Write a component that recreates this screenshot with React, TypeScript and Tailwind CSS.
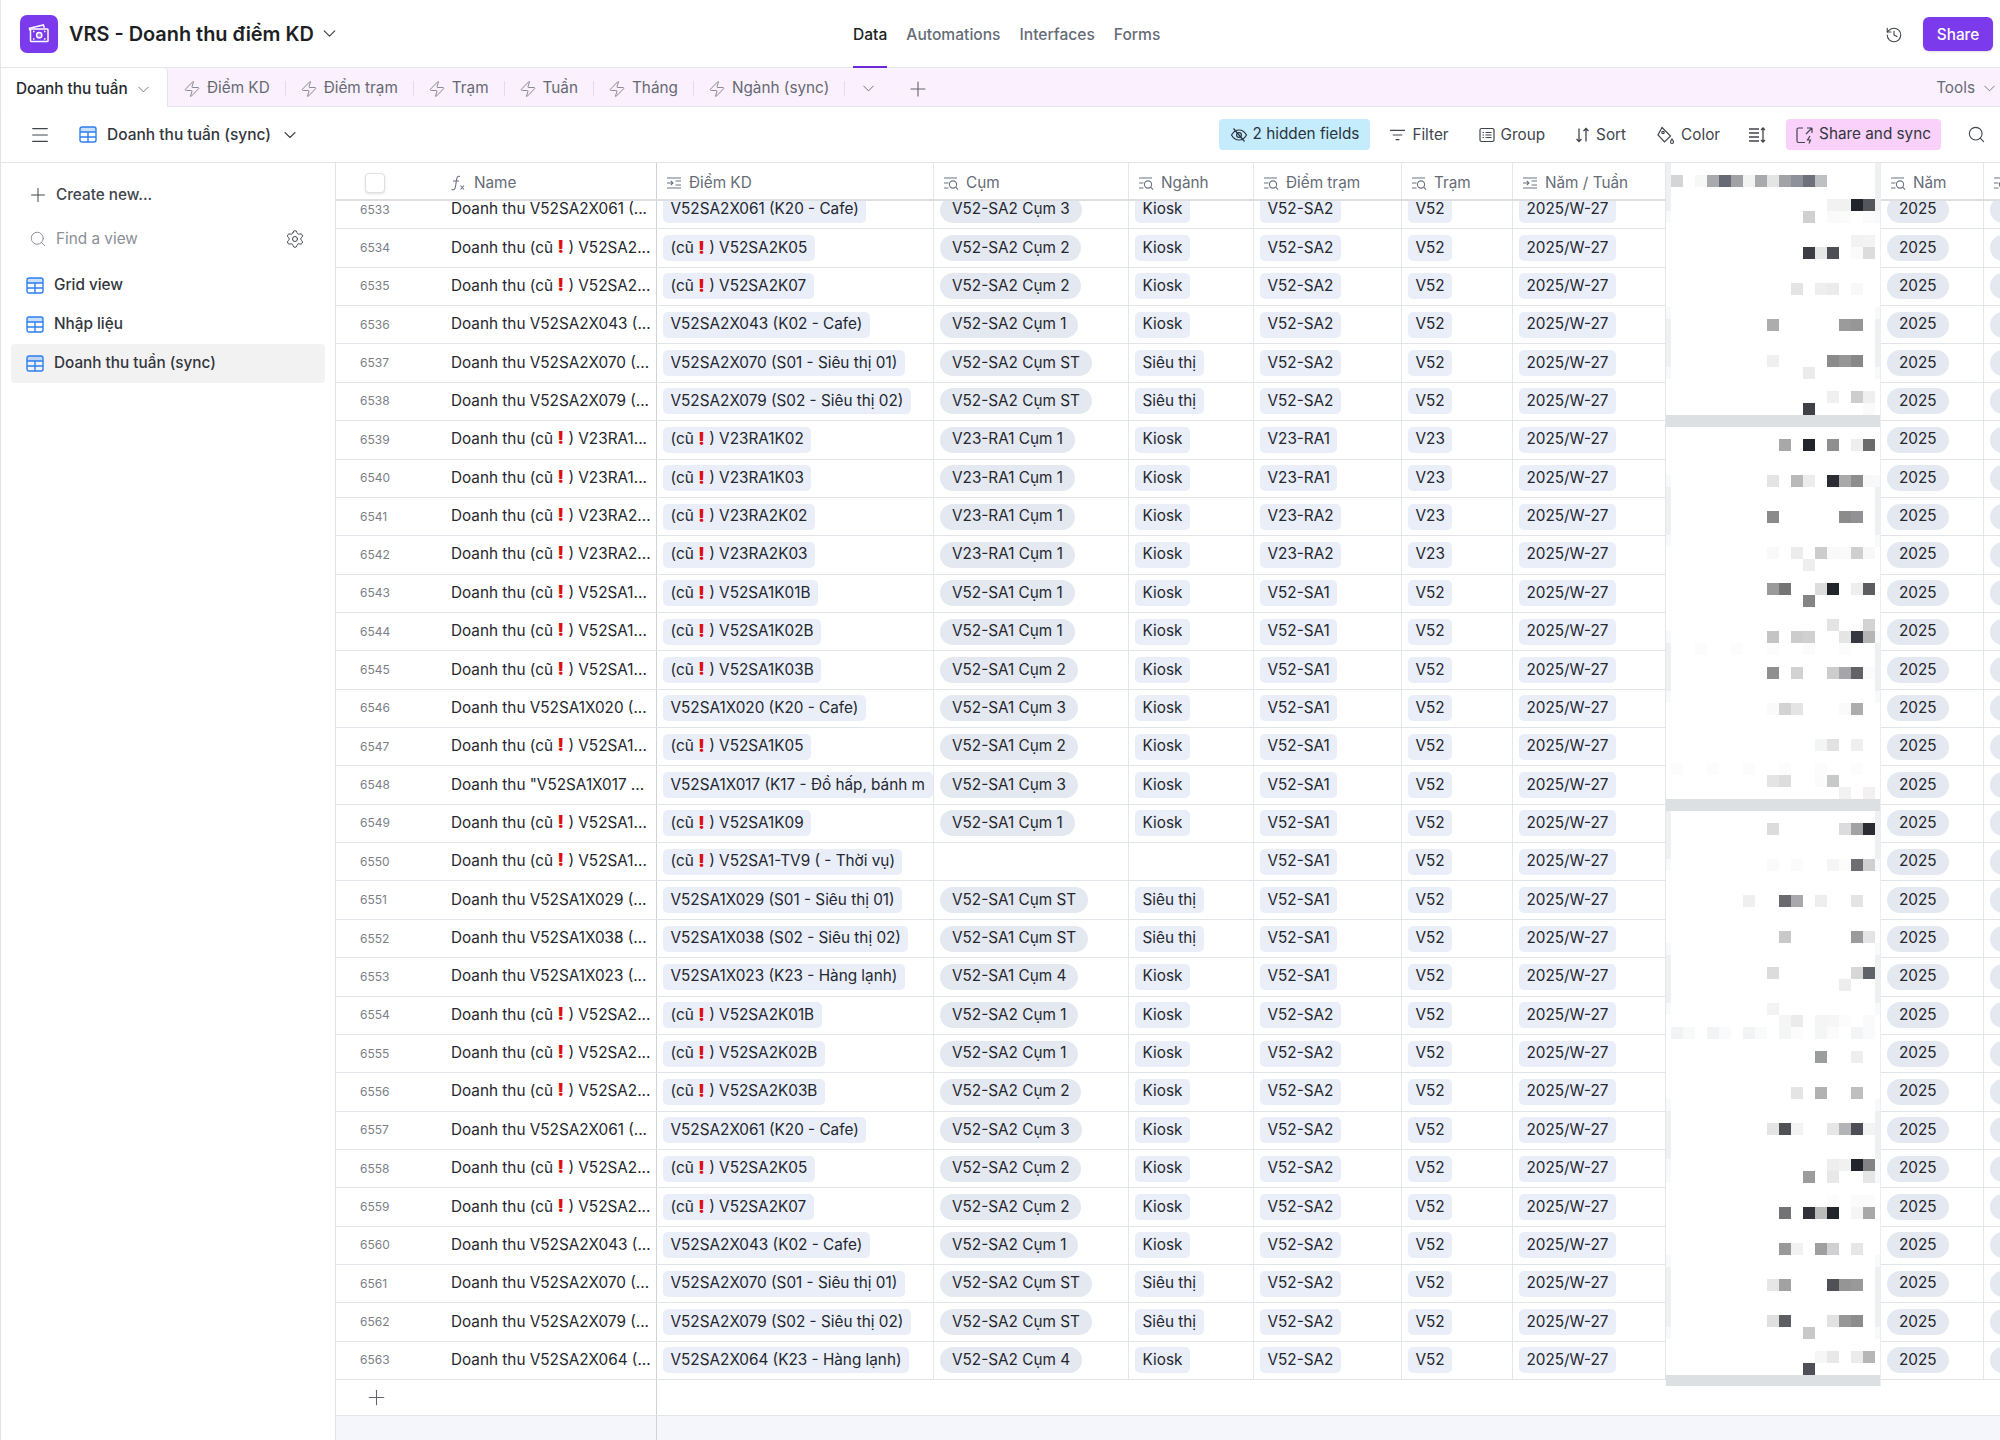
import { ChevronDown, History, Menu, Plus, Search, Settings, Zap } from 'lucide-react';

type RowData = {
  id: number;
  name: string;
  old?: boolean;
  kd: string;
  cum?: string;
  nganh?: string;
  tram: string;
  short: string;
};

const shop = (id: number, code: string, label: string, cum: string, nganh = 'Kiosk'): RowData => {
  const tram = code.slice(0, 3) + '-' + code.slice(3, 6);
  return {
    id,
    name: `${code} (...`,
    kd: `${code} (${label})`,
    cum: `${tram} Cụm ${cum}`,
    nganh,
    tram,
    short: code.slice(0, 3),
  };
};

const old = (id: number, code: string, cum: string, cumPrefix?: string): RowData => {
  const tram = code.slice(0, 3) + '-' + code.slice(3, 6);
  return {
    id,
    name: `${code.slice(0, 6)}...`,
    old: true,
    kd: code,
    cum: `${cumPrefix ?? tram} Cụm ${cum}`,
    nganh: 'Kiosk',
    tram,
    short: code.slice(0, 3),
  };
};

const rows: RowData[] = [
  shop(6533, 'V52SA2X061', 'K20 - Cafe', '3'),
  old(6534, 'V52SA2K05', '2'),
  old(6535, 'V52SA2K07', '2'),
  shop(6536, 'V52SA2X043', 'K02 - Cafe', '1'),
  shop(6537, 'V52SA2X070', 'S01 - Siêu thị 01', 'ST', 'Siêu thị'),
  shop(6538, 'V52SA2X079', 'S02 - Siêu thị 02', 'ST', 'Siêu thị'),
  old(6539, 'V23RA1K02', '1'),
  old(6540, 'V23RA1K03', '1'),
  old(6541, 'V23RA2K02', '1', 'V23-RA1'),
  old(6542, 'V23RA2K03', '1', 'V23-RA1'),
  old(6543, 'V52SA1K01B', '1'),
  old(6544, 'V52SA1K02B', '1'),
  old(6545, 'V52SA1K03B', '2'),
  shop(6546, 'V52SA1X020', 'K20 - Cafe', '3'),
  old(6547, 'V52SA1K05', '2'),
  {
    id: 6548,
    name: '"V52SA1X017 ...',
    kd: 'V52SA1X017 (K17 - Đồ hấp, bánh m',
    cum: 'V52-SA1 Cụm 3',
    nganh: 'Kiosk',
    tram: 'V52-SA1',
    short: 'V52',
  },
  old(6549, 'V52SA1K09', '1'),
  { id: 6550, name: 'V52SA1...', old: true, kd: 'V52SA1-TV9 ( - Thời vụ)', tram: 'V52-SA1', short: 'V52' },
  shop(6551, 'V52SA1X029', 'S01 - Siêu thị 01', 'ST', 'Siêu thị'),
  shop(6552, 'V52SA1X038', 'S02 - Siêu thị 02', 'ST', 'Siêu thị'),
  shop(6553, 'V52SA1X023', 'K23 - Hàng lạnh', '4'),
  old(6554, 'V52SA2K01B', '1'),
  old(6555, 'V52SA2K02B', '1'),
  old(6556, 'V52SA2K03B', '2'),
  shop(6557, 'V52SA2X061', 'K20 - Cafe', '3'),
  old(6558, 'V52SA2K05', '2'),
  old(6559, 'V52SA2K07', '2'),
  shop(6560, 'V52SA2X043', 'K02 - Cafe', '1'),
  shop(6561, 'V52SA2X070', 'S01 - Siêu thị 01', 'ST', 'Siêu thị'),
  shop(6562, 'V52SA2X079', 'S02 - Siêu thị 02', 'ST', 'Siêu thị'),
  shop(6563, 'V52SA2X064', 'K23 - Hàng lạnh', '4'),
];

// blurred column: [row, [[cell, colour], ...]] on a 12px raster
const mosaic: [number, [number, string][]][] = [
  [1, [[0, '#d4d5d7'], [2, '#f7f7f7'], [3, '#a9aaad'], [4, '#666a75'], [5, '#a0a2a6'], [6, '#f3f3f3'], [7, '#a9aaae'], [8, '#e4e4e5'], [9, '#a2a3a7'], [10, '#8e909a'], [11, '#6e717c'], [12, '#bfc0c4']]],
  [3, [[13, '#f2f2f2'], [14, '#f1f1f1'], [15, '#22242b'], [16, '#55565b']]],
  [4, [[11, '#d0d0d0'], [13, '#fafafa'], [14, '#fbfbfb'], [16, '#fbfbfb']]],
  [6, [[15, '#f2f2f2'], [16, '#f3f3f3']]],
  [7, [[11, '#3c3d44'], [12, '#e6e6e6'], [13, '#4c4d55'], [15, '#fafafa'], [16, '#dcdcdc']]],
  [10, [[10, '#e4e4e4'], [12, '#eeeeee'], [13, '#ebebeb'], [15, '#f8f8f8']]],
  [13, [[8, '#adadad'], [14, '#9b9b9b'], [15, '#969696']]],
  [16, [[8, '#efefef'], [13, '#8b8b8b'], [14, '#969696'], [15, '#888888']]],
  [17, [[11, '#ebebeb']]],
  [19, [[13, '#f0f0f0'], [15, '#cdcdcd'], [16, '#efefef']]],
  [20, [[11, '#404146'], [16, '#fafafa']]],
  [23, [[9, '#a8a8a8'], [11, '#22242b'], [13, '#8f8f8f'], [15, '#eeeeee'], [16, '#6b6b6b']]],
  [26, [[8, '#e4e4e4'], [10, '#b9b9b9'], [11, '#ececec'], [13, '#2b2c33'], [14, '#a9a9a9'], [15, '#8d8d8d'], [16, '#f8f8f8']]],
  [29, [[8, '#8a8a8a'], [14, '#8c8c8c'], [15, '#929296']]],
  [32, [[8, '#f9f9f9'], [10, '#ececec'], [12, '#cccccc'], [13, '#f9f9f9'], [14, '#fafafa'], [15, '#cfcfcf'], [16, '#f8f8f8']]],
  [33, [[11, '#eeeeee']]],
  [35, [[8, '#9a9a9a'], [9, '#747474'], [12, '#dddddd'], [13, '#22242b'], [15, '#eeeeee'], [16, '#5c5c61']]],
  [36, [[11, '#858585']]],
  [38, [[13, '#e4e4e4'], [16, '#d3d3d3']]],
  [39, [[8, '#c4c4c4'], [10, '#cccccc'], [11, '#d0d0d0'], [14, '#e5e5e5'], [15, '#36383f'], [16, '#b5b5b5']]],
  [40, [[2, '#fcfcfc'], [5, '#fcfcfc'], [8, '#fcfcfc'], [11, '#fbfbfb'], [14, '#fcfcfc']]],
  [42, [[8, '#8f8f8f'], [10, '#d2d2d2'], [13, '#cdcdcd'], [14, '#a6a6a8'], [15, '#626266'], [16, '#fbfbfb']]],
  [45, [[8, '#fafafa'], [9, '#d3d3d3'], [10, '#e4e4e4'], [14, '#fafafa'], [15, '#adadad']]],
  [48, [[12, '#f3f4f4'], [13, '#e2e2e2'], [15, '#efefef']]],
  [50, [[0, '#fcfcfc'], [3, '#fcfcfc'], [6, '#fcfcfc'], [9, '#fcfcfc'], [12, '#fcfcfc'], [15, '#fcfcfc']]],
  [51, [[8, '#e4e4e4'], [9, '#dddddd'], [12, '#fbfbfb'], [13, '#c8caca']]],
  [52, [[14, '#f2f2f2'], [16, '#f2f0f0']]],
  [55, [[8, '#dcdcdc'], [14, '#dcdcdc'], [15, '#a2a2a4'], [16, '#2a2b33']]],
  [58, [[8, '#fafafa'], [10, '#fbfbfb'], [13, '#f5f5f5'], [14, '#fcfcfc'], [15, '#6e6e72'], [16, '#d0d0d0']]],
  [61, [[6, '#efefef'], [9, '#6b6b6f'], [10, '#a9a9ad'], [12, '#eeeeee'], [15, '#e4e4e4']]],
  [64, [[9, '#c8c8c8'], [15, '#9b9b9e'], [16, '#e4e4e4']]],
  [67, [[8, '#dcdcdc'], [15, '#d7d7d7'], [16, '#606269']]],
  [68, [[14, '#ededed']]],
  [70, [[8, '#f3f3f3']]],
  [71, [[9, '#f5f5f5'], [10, '#ebebeb'], [12, '#f5f5f5'], [13, '#f6f6f6'], [14, '#fcfcfc'], [16, '#fafafa']]],
  [72, [[0, '#f2f3f4'], [1, '#f8f9f9'], [3, '#f2f3f5'], [4, '#f9fafa'], [6, '#f2f3f5'], [7, '#f9fafa'], [9, '#f4f5f5'], [10, '#fcfcfc'], [12, '#f4f5f5'], [13, '#fbfbfb'], [15, '#f3f4f5'], [16, '#fafafa']]],
  [74, [[12, '#9c9e9e'], [15, '#eeeeee']]],
  [77, [[10, '#e4e4e4'], [12, '#b2b2b2'], [15, '#bfbfbf']]],
  [80, [[8, '#e4e4e4'], [9, '#505157'], [10, '#f3f3f3'], [13, '#e6e6e6'], [14, '#b4b4b6'], [15, '#4c4d55'], [16, '#f3f3f3']]],
  [83, [[13, '#eeeeee'], [14, '#f1f1f1'], [15, '#22242b'], [16, '#838385']]],
  [84, [[11, '#9c9c9c'], [13, '#e8e8e8'], [16, '#e6e6e6']]],
  [86, [[13, '#fcfcfc'], [15, '#fbfbfb'], [16, '#fbfbfb']]],
  [87, [[9, '#737376'], [11, '#32333a'], [12, '#bbbbbb'], [13, '#22242b'], [15, '#f5f5f5'], [16, '#a8a8a8']]],
  [90, [[9, '#999999'], [10, '#f2f2f2'], [12, '#9f9f9f'], [13, '#d0d0d2'], [15, '#e6e6e6']]],
  [93, [[8, '#e6e6e6'], [9, '#a2a2a2'], [13, '#505157'], [14, '#959595'], [15, '#999999']]],
  [96, [[8, '#e0e0e0'], [9, '#5e5f64'], [13, '#e2e2e2'], [14, '#979797'], [15, '#8d8d8d']]],
  [97, [[11, '#c8c8c8']]],
  [99, [[12, '#f6f6f6'], [13, '#e8e8e8'], [15, '#ebebeb'], [16, '#b6b6b6']]],
  [100, [[11, '#4f5057']]],
];

const stripDark = [0, 1, 2, 3, 13, 14, 15, 16, 27, 28, 29, 30, 40, 41, 42, 43, 54, 55, 56, 57, 66, 67, 68, 69, 79, 80, 81, 82, 92, 93, 94, 95, 96];
const stripLight = [4, 12, 17, 26, 31, 39, 44, 58, 65, 70, 78, 83, 84, 91, 97];

function RedactedColumn() {
  return (
    <svg className="absolute left-[1330px] top-0 z-20" width={215} height={1223} viewBox="0 0 215 1223">
      <rect width={214} height={1223} fill="#ffffff" />
      <rect x={214} width={1} height={1223} fill="#eceef1" />
      {stripDark.map((r) => (
        <g key={r} fill="#eef0f2">
          <rect x={0} y={r * 12} width={5} height={12} />
          <rect x={209} y={r * 12} width={5} height={12} />
        </g>
      ))}
      {stripLight.map((r) => (
        <g key={r} fill="#f8f9fa">
          <rect x={0} y={r * 12} width={5} height={12} />
          <rect x={209} y={r * 12} width={5} height={12} />
        </g>
      ))}
      {mosaic.map(([r, cells]) =>
        cells.map(([c, colour]) => <rect key={`${r}-${c}`} x={5 + c * 12} y={r * 12} width={12} height={12} fill={colour} />),
      )}
      {[21, 53, 101].map((r) => (
        <rect key={r} x={0} y={r * 12} width={214} height={12} fill="#dde0e3" />
      ))}
    </svg>
  );
}

function GridIcon() {
  return (
    <svg width="18" height="17" viewBox="0 0 18 17" fill="none" stroke="#2d7ff0" strokeWidth="1.4">
      <rect x="1" y="1" width="16" height="15" rx="2" />
      <path d="M1 6h16M1 11h16M9 6v10" />
      <path d="M1 3a2 2 0 0 1 2-2h12a2 2 0 0 1 2 2v3H1z" fill="#2d7ff0" fillOpacity="0.25" stroke="none" />
    </svg>
  );
}

function LookupIcon() {
  return (
    <svg className="shrink-0" width="16" height="16" viewBox="0 0 16 16" fill="none" stroke="#6b7280" strokeWidth="1.1">
      <path d="M1 3h13M1 8h4.5M1 13h4.5" />
      <circle cx="10" cy="9.5" r="3.6" />
      <path d="M12.7 12.2l2.3 2.5" />
    </svg>
  );
}

function LinkedIcon() {
  return (
    <svg className="shrink-0" width="16" height="16" viewBox="0 0 16 16" fill="none" stroke="#6b7280" strokeWidth="1.1">
      <path d="M1 3h14M1 13h14M9.5 6h5.5M9.5 10h5.5M1 8h5.5M4.8 5.8L7 8l-2.2 2.2" />
    </svg>
  );
}

function FormulaIcon() {
  return (
    <svg className="shrink-0" width="18" height="18" viewBox="0 0 18 18" fill="none" stroke="#6b7280" strokeWidth="1.1">
      <path d="M11 2.5C9 1.5 8 3 7.6 5.5L6.4 13C6 15.5 4.5 16.5 2.5 15.5M4 7h6" />
      <path d="M11.5 11.5l3.5 4M15 11.5l-3.5 4" />
    </svg>
  );
}

function CashIcon() {
  return (
    <svg width="24" height="24" viewBox="0 0 24 24" fill="none" stroke="#ffffff" strokeWidth="1.5">
      <path d="M3 8.5L2.4 6.2l14-3.2.9 2.8" />
      <rect x="3.5" y="7" width="17.5" height="12.5" rx="0.8" />
      <circle cx="12.2" cy="13.2" r="2.6" fill="#ffffff" fillOpacity="0.25" />
      <path d="M6 9.5h1.5M17 9.5h1.5M6 17h1.5M17 17h1.5" />
    </svg>
  );
}

function ToolbarButton({ icon, label }: { icon: React.ReactNode; label: string }) {
  return (
    <div className="flex items-center gap-[6px] text-[15.3px] text-[#41454d]">
      {icon}
      <span>{label}</span>
    </div>
  );
}

function Tab({ label }: { label: string }) {
  return (
    <div className="flex items-center">
      <div className="flex items-center gap-[6px] pl-[14px] pr-[15px] text-[15.3px] text-[#656a72]">
        <Zap size={18} strokeWidth={1.1} className="text-[#70747c]" />
        <span>{label}</span>
      </div>
      <div className="h-[15px] w-px bg-[#e3dbe6]" />
    </div>
  );
}

function Pill({ children, round }: { children: React.ReactNode; round?: boolean }) {
  return (
    <span
      className={
        round
          ? 'flex h-[26px] items-center whitespace-nowrap rounded-full bg-[#e4e8f0] px-[12px] text-[#24272e]'
          : 'flex h-[26px] max-w-full items-center whitespace-nowrap rounded-[5px] bg-[#e9eef9] px-[7.5px] text-[#24272e]'
      }
    >
      {children}
    </span>
  );
}

function Warn() {
  return <span className="mx-[4.5px] text-[17px] font-black leading-none text-[#e00f0f]">!</span>;
}

function Row({ row }: { row: RowData }) {
  const cell = 'flex h-full shrink-0 items-center border-r border-[#e3e6ea] pl-[6px]';
  return (
    <div className="flex h-[38.37px] shrink-0 border-b border-[#e1e4e8] text-[15.3px] text-[#24272e]">
      <div className="flex h-full w-[321px] shrink-0 items-center border-r border-[#cfd2d6]">
        <div className="w-[115px] shrink-0 pl-[24px] text-[12px] text-[#7b8087]">{row.id}</div>
        <div className="whitespace-nowrap">
          Doanh thu {row.old ? <>(cũ<Warn />) </> : null}
          {row.name}
        </div>
      </div>
      <div className={`${cell} w-[277px]`}>
        <Pill>
          {row.old ? <>(cũ<Warn />)&nbsp;</> : null}
          {row.kd}
        </Pill>
      </div>
      <div className={`${cell} w-[195px]`}>{row.cum ? <Pill round>{row.cum}</Pill> : null}</div>
      <div className={`${cell} w-[125px]`}>{row.nganh ? <Pill>{row.nganh}</Pill> : null}</div>
      <div className={`${cell} w-[148px]`}>
        <Pill>{row.tram}</Pill>
      </div>
      <div className={`${cell} w-[111px]`}>
        <Pill>{row.short}</Pill>
      </div>
      <div className={`${cell} w-[153px]`}>
        <Pill>2025/W-27</Pill>
      </div>
      <div className="h-full w-[215px] shrink-0" />
      <div className={`${cell} w-[103px]`}>
        <Pill round>2025</Pill>
      </div>
      <div className="flex h-full flex-1 items-center overflow-hidden pl-[6px]">
        <div className="h-[26px] w-[40px] shrink-0 rounded-full bg-[#e4e8f0]" />
      </div>
    </div>
  );
}

function HeaderCell({ width, icon, label }: { width: string; icon: React.ReactNode; label: string }) {
  return (
    <div className={`flex h-full shrink-0 items-center gap-[7px] border-r border-[#e3e6ea] pl-[9px] pt-[4px] ${width}`}>
      {icon}
      <span className="whitespace-nowrap">{label}</span>
    </div>
  );
}

export default function App() {
  return (
    <div className="flex h-[1440px] w-[2000px] flex-col overflow-hidden bg-white font-['Inter',sans-serif]">
      <header className="flex h-[68px] shrink-0 items-center border-b border-l border-[#e6e6e9]">
        <div className="flex w-[852px] shrink-0 items-center pl-[19px]">
          <div className="flex h-[38px] w-[38px] items-center justify-center rounded-[7px] bg-[#7c3aed]">
            <CashIcon />
          </div>
          <div className="ml-[11px] pt-[2px] text-[19.9px] font-semibold text-[#1d1f25]">VRS - Doanh thu điểm KD</div>
          <ChevronDown size={21} strokeWidth={1.4} className="ml-[5px] text-[#41454d]" />
        </div>
        <nav className="flex h-full items-center gap-[19px] text-[15.6px] font-medium text-[#666c76]">
          <div className="relative flex h-full items-center pt-[2px] text-[#1d1f25]">
            Data
            <div className="absolute bottom-[-1px] left-0 h-[2px] w-full bg-[#6d28d9]" />
          </div>
          <div className="pt-[2px]">Automations</div>
          <div className="pt-[2px]">Interfaces</div>
          <div className="pt-[2px]">Forms</div>
        </nav>
        <div className="ml-auto flex items-center gap-[20px] pr-[7px]">
          <History size={18} strokeWidth={1.5} className="mt-[2px] text-[#41454d]" />
          <button className="flex h-[34px] w-[70px] items-center justify-center rounded-[6px] bg-[#7c3aed] pt-[3px] text-[15.3px] font-medium text-white shadow-sm">
            Share
          </button>
        </div>
      </header>

      <div className="flex h-[39px] shrink-0 items-stretch border-b border-[#e7e3ea] bg-[#fbf0fd]">
        <div className="mb-[-1px] flex w-[168px] items-center gap-[6px] rounded-tr-[4px] border-l border-r border-[#e7e3ea] bg-white pl-[15px] pt-[3px] text-[15.3px] font-medium text-[#26282e]">
          Doanh thu tuần
          <ChevronDown size={19} strokeWidth={1.1} className="text-[#60646c]" />
        </div>
        <div className="flex items-center pl-[1px] pt-[3px]">
          <Tab label="Điểm KD" />
          <Tab label="Điểm trạm" />
          <Tab label="Trạm" />
          <Tab label="Tuần" />
          <Tab label="Tháng" />
          <Tab label="Ngành (sync)" />
          <ChevronDown size={19} strokeWidth={1.1} className="ml-[14px] text-[#60646c]" />
          <Plus size={24} strokeWidth={1.1} className="ml-[28px] text-[#60646c]" />
        </div>
        <div className="ml-auto flex items-center gap-[5px] pr-[1px] pt-[3px] text-[15.3px] text-[#666c76]">
          Tools
          <ChevronDown size={19} strokeWidth={1.1} />
        </div>
      </div>

      <div className="flex h-[56px] shrink-0 items-center border-b border-l border-[#e4e4e6] pl-[28px]">
        <Menu size={22} strokeWidth={1.2} className="text-[#41454d]" />
        <div className="ml-[28px]">
          <GridIcon />
        </div>
        <div className="ml-[10px] text-[15.5px] font-medium text-[#33363d]">Doanh thu tuần (sync)</div>
        <ChevronDown size={20} strokeWidth={1.3} className="ml-[9px] text-[#41454d]" />

        <div className="ml-auto flex items-center pr-[14px]">
          <div className="flex h-[31px] items-center gap-[5px] rounded-[4px] bg-[#c4ecfd] px-[11px] text-[15.3px] text-[#2b3440]">
            <svg width="18" height="18" viewBox="0 0 18 18" fill="none" stroke="#2b3440" strokeWidth="1.2">
              <path d="M1.5 9C3.5 5.5 6 4 9 4s5.5 1.5 7.5 5c-2 3.5-4.5 5-7.5 5s-5.5-1.5-7.5-5z" />
              <circle cx="9" cy="9" r="2.4" />
              <path d="M3.5 2.5l11 13" />
            </svg>
            2 hidden fields
          </div>
          <div className="ml-[19px] flex items-center gap-[30px] pt-px">
            <ToolbarButton
              label="Filter"
              icon={
                <svg width="17" height="14" viewBox="0 0 18 14" fill="none" stroke="#41454d" strokeWidth="1.3">
                  <path d="M1 2h16M4 7h10M7 12h4" />
                </svg>
              }
            />
            <ToolbarButton
              label="Group"
              icon={
                <svg width="16" height="16" viewBox="0 0 16 16" fill="none" stroke="#41454d" strokeWidth="1.2">
                  <rect x="1" y="1.5" width="14" height="13" rx="1.5" />
                  <path d="M3.5 5.5h1.5M6.5 5.5h6M3.5 8h1.5M6.5 8h6M3.5 10.5h1.5M6.5 10.5h6" />
                </svg>
              }
            />
            <ToolbarButton
              label="Sort"
              icon={
                <svg width="15" height="16" viewBox="0 0 15 16" fill="none" stroke="#41454d" strokeWidth="1.3">
                  <path d="M4 1.5v13M1.5 12L4 14.5 6.5 12M11 14.5v-13M8.5 4L11 1.5 13.5 4" />
                </svg>
              }
            />
            <ToolbarButton
              label="Color"
              icon={
                <svg width="19" height="19" viewBox="0 0 19 19" fill="none" stroke="#41454d" strokeWidth="1.2">
                  <path d="M6 1.5l8.5 8.5-6 6-6.5-7z" />
                  <circle cx="7" cy="6.5" r="1.2" />
                  <path d="M16 13c1 1.5 1.5 2.2 1.5 3a1.5 1.5 0 0 1-3 0c0-.8.5-1.5 1.5-3z" />
                </svg>
              }
            />
            <svg className="-ml-[2px]" width="18" height="16" viewBox="0 0 18 16" fill="none" stroke="#41454d" strokeWidth="1.3">
              <path d="M1 2h10M1 6h10M1 10h10M1 14h10M15 1v14M13 3l2-2 2 2M13 13l2 2 2-2" />
            </svg>
          </div>
          <div className="ml-[20px] flex h-[31px] items-center gap-[5px] rounded-[4px] bg-[#f9d1fa] px-[10px] text-[15.3px] text-[#33363d]">
            <svg width="18" height="19" viewBox="0 0 18 19" fill="none" stroke="#41454d" strokeWidth="1.2">
              <path d="M7 3H2.5A1.5 1.5 0 0 0 1 4.5V16a1.5 1.5 0 0 0 1.5 1.5H9M16 8V3M16 3h-5M16 3l-6 6" />
              <path d="M14 11l-2.5 4h3l-1.5 3.5" />
            </svg>
            Share and sync
          </div>
          <Search size={19} strokeWidth={1.4} className="ml-[26px] text-[#41454d]" />
        </div>
      </div>

      <div className="flex min-h-0 flex-1">
        <aside className="flex w-[336px] shrink-0 flex-col border-l border-r border-[#e4e4e6] px-[10px] pt-[19px]">
          <div className="flex h-[26px] items-center gap-[7px] pl-[16px] text-[15.3px] font-medium text-[#41454d]">
            <Plus size={22} strokeWidth={1.1} />
            Create new...
          </div>
          <div className="mt-[18px] flex h-[26px] items-center gap-[9px] pl-[18px] pr-[20px] text-[15.3px] text-[#8b8f97]">
            <Search size={18} strokeWidth={1.3} />
            Find a view
            <Settings size={20} strokeWidth={1.2} className="ml-auto text-[#41454d]" />
          </div>
          <div className="mt-[14px] flex flex-col">
            {['Grid view', 'Nhập liệu', 'Doanh thu tuần (sync)'].map((name, i) => (
              <div
                key={name}
                className={
                  i === 2
                    ? 'flex h-[39px] items-center gap-[10px] rounded-[4px] bg-[#f2f2f2] pl-[15px] text-[15.3px] font-medium text-[#33363d]'
                    : 'flex h-[39px] items-center gap-[10px] pl-[15px] text-[15.3px] font-medium text-[#33363d]'
                }
              >
                <GridIcon />
                {name}
              </div>
            ))}
          </div>
        </aside>

        <main className="relative flex min-w-0 flex-1 flex-col overflow-hidden">
          <div className="z-10 flex h-[38px] shrink-0 border-b-2 border-[#dcdee1] bg-white text-[15.3px] text-[#666c76]">
            <div className="flex h-full w-[321px] shrink-0 items-center border-r border-[#cfd2d6] pt-[4px]">
              <div className="ml-[29px] h-[20px] w-[20px] rounded-[4px] border border-[#dfe0e2] bg-white shadow-sm" />
              <div className="ml-[64px] flex items-center gap-[7px]">
                <FormulaIcon />
                Name
              </div>
            </div>
            <HeaderCell width="w-[277px]" icon={<LinkedIcon />} label="Điểm KD" />
            <HeaderCell width="w-[195px]" icon={<LookupIcon />} label="Cụm" />
            <HeaderCell width="w-[125px]" icon={<LookupIcon />} label="Ngành" />
            <HeaderCell width="w-[148px]" icon={<LookupIcon />} label="Điểm trạm" />
            <HeaderCell width="w-[111px]" icon={<LookupIcon />} label="Trạm" />
            <HeaderCell width="w-[153px]" icon={<LinkedIcon />} label="Năm / Tuần" />
            <div className="w-[215px] shrink-0" />
            <HeaderCell width="w-[103px]" icon={<LookupIcon />} label="Năm" />
            <div className="flex flex-1 items-center overflow-hidden pl-[9px] pt-[4px]">
              <LookupIcon />
            </div>
          </div>

          <div className="flex shrink-0 flex-col overflow-hidden">
            <div className="mt-[-10px] flex flex-col">
              {rows.map((row) => (
                <Row key={row.id} row={row} />
              ))}
            </div>
          </div>

          <div className="flex h-[36px] shrink-0 items-center border-b border-[#e1e4e8]">
            <div className="flex h-full w-[321px] shrink-0 items-center border-r border-[#cfd2d6] pl-[28px]">
              <Plus size={25} strokeWidth={1} className="text-[#60646c]" />
            </div>
          </div>

          <div className="flex-1 bg-[#f5f6fb]">
            <div className="h-full w-[321px] border-r border-[#cfd2d6]" />
          </div>

          <RedactedColumn />
        </main>
      </div>
    </div>
  );
}
